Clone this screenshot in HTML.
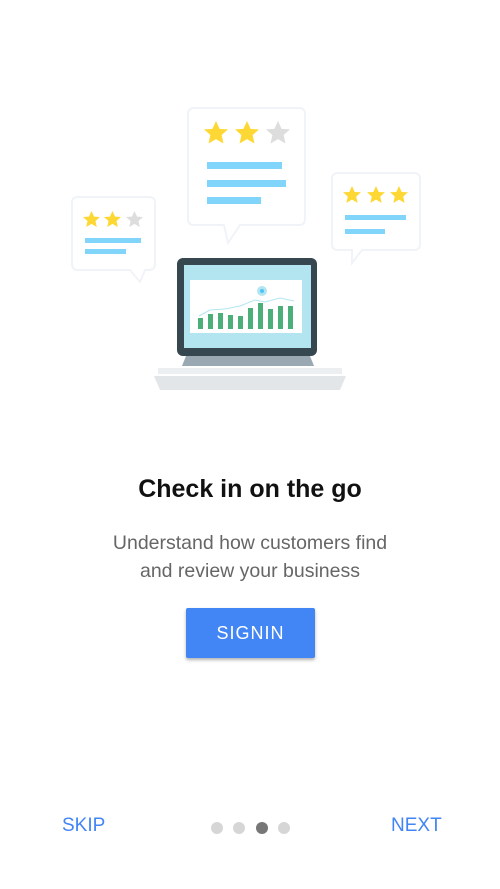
<!DOCTYPE html>
<html><head><style>
body{margin:0;width:500px;height:889px;background:#fff;font-family:"Liberation Sans",Roboto,sans-serif;position:relative;overflow:hidden}
.t{position:absolute;left:0;width:500px;text-align:center}
</style></head><body>
<svg width="500" height="420" style="position:absolute;left:0;top:0" xmlns="http://www.w3.org/2000/svg">
<defs>
<symbol id="st" viewBox="-10 -10 20 20"><path d="M0,-10 L3,-3.4 L10,-3 L4.7,1.7 L6.2,8.8 L0,5.1 L-6.2,8.8 L-4.7,1.7 L-10,-3 L-3,-3.4Z"/></symbol>
</defs>
<g fill="#fff" stroke="#f0f4f8" stroke-width="2">
<path d="M194,108 H299 Q305,108 305,114 V219 Q305,225 299,225 H240 L228,243 L224,225 H194 Q188,225 188,219 V114 Q188,108 194,108Z"/>
<path d="M78,197 H149 Q155,197 155,203 V264 Q155,270 149,270 H145 L140,282 L130,270 H78 Q72,270 72,264 V203 Q72,197 78,197Z"/>
<path d="M338,173 H414 Q420,173 420,179 V244 Q420,250 414,250 H362 L352,263 L352,250 H338 Q332,250 332,244 V179 Q332,173 338,173Z"/>
</g>
<g fill="#fdd835">
<use href="#st" x="204" y="121" width="24" height="24"/>
<use href="#st" x="235" y="121" width="24" height="24"/>
<use href="#st" x="83" y="211" width="17" height="17"/>
<use href="#st" x="104" y="211" width="17" height="17"/>
<use href="#st" x="343" y="186" width="18" height="18"/>
<use href="#st" x="367" y="186" width="18" height="18"/>
<use href="#st" x="390" y="186" width="18" height="18"/>
</g>
<g fill="#ddd">
<use href="#st" x="266" y="121" width="24" height="24"/>
<use href="#st" x="126" y="211" width="17" height="17"/>
</g>
<g fill="#81d4fa">
<rect x="207" y="162" width="75" height="7"/>
<rect x="207" y="180" width="79" height="7"/>
<rect x="207" y="197" width="54" height="7"/>
<rect x="85" y="238" width="56" height="5"/>
<rect x="85" y="249" width="41" height="5"/>
<rect x="345" y="215" width="61" height="5"/>
<rect x="345" y="229" width="40" height="5"/>
</g>
<rect x="177" y="258" width="140" height="98" rx="6" fill="#37474f"/>
<rect x="184" y="265" width="127" height="83" fill="#b3e5f0"/>
<rect x="190" y="280" width="112" height="53" fill="#fff"/>
<polyline points="199,316 210,310 225,309 240,306 255,300 265,302 280,298 294,301" fill="none" stroke="#b3e5f0" stroke-width="1"/>
<circle cx="262" cy="291" r="5" fill="#b3e5f0"/><circle cx="262" cy="291" r="2" fill="#4fc3f7"/>
<g fill="#4caf7a">
<rect x="198" y="318" width="5" height="11"/><rect x="208" y="314" width="5" height="15"/><rect x="218" y="313" width="5" height="16"/><rect x="228" y="315" width="5" height="14"/><rect x="238" y="316" width="5" height="13"/><rect x="248" y="308" width="5" height="21"/><rect x="258" y="303" width="5" height="26"/><rect x="268" y="309" width="5" height="20"/><rect x="278" y="306" width="5" height="23"/><rect x="288" y="306" width="5" height="23"/>
</g>
<path d="M186,356 H310 L314,366 H182Z" fill="#9aa8b2"/>
<rect x="158" y="368" width="184" height="6" fill="#eceff1"/>
<path d="M154,376 H346 L340,390 H160Z" fill="#e3e6e9"/>
</svg>
<div class="t" style="top:475px;font-size:25px;font-weight:bold;color:#111">Check in on the go</div>
<div class="t" style="top:529px;font-size:19.5px;line-height:28px;color:#666">Understand how customers find<br>and review your business</div>
<div style="position:absolute;left:186px;top:608px;width:129px;height:50px;background:#4285f4;border-radius:2px;box-shadow:0 2px 3px rgba(0,0,0,.3);color:#fff;font-size:18px;font-weight:500;letter-spacing:1px;line-height:50px;text-align:center">SIGNIN</div>
<div style="position:absolute;left:62px;top:815px;color:#4285f4;font-size:19px;font-weight:500">SKIP</div>
<div style="position:absolute;left:391px;top:815px;color:#4285f4;font-size:19px;font-weight:500">NEXT</div>
<div style="position:absolute;top:822px;left:211px;width:12px;height:12px;border-radius:50%;background:#d6d6d6"></div>
<div style="position:absolute;top:822px;left:233px;width:12px;height:12px;border-radius:50%;background:#d6d6d6"></div>
<div style="position:absolute;top:822px;left:256px;width:12px;height:12px;border-radius:50%;background:#777"></div>
<div style="position:absolute;top:822px;left:278px;width:12px;height:12px;border-radius:50%;background:#d6d6d6"></div>
</body></html>
